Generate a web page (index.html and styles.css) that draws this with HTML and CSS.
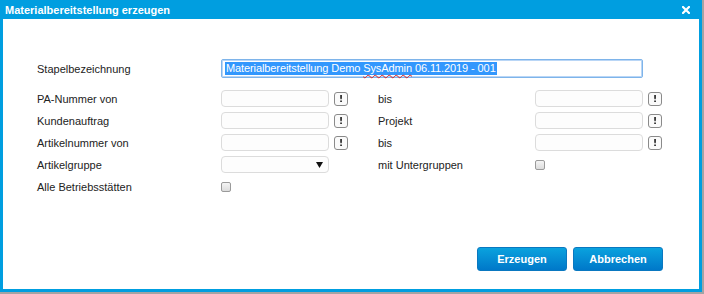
FILE: index.html
```html
<!DOCTYPE html>
<html lang="de">
<head>
<meta charset="utf-8">
<title>Materialbereitstellung erzeugen</title>
<link rel="stylesheet" href="styles.css">
</head>
<body>
<div class="dialog">
  <div class="titlebar">
    <span class="title">Materialbereitstellung erzeugen</span>
    <svg class="close" width="8" height="8" viewBox="0 0 8 8"><path d="M1 1L7 7M7 1L1 7" stroke="#fff" stroke-width="2.2" stroke-linecap="square"/></svg>
  </div>
  <div class="content">
    <div class="row-main">
      <label class="lbl">Stapelbezeichnung</label>
      <div class="field-main"><span class="sel">Materialbereitstellung Demo <span class="spell">SysAdmin</span> 06.11.2019 - 001</span></div>
    </div>
    <div class="grid">
      <label class="lbl">PA-Nummer von</label>
      <div class="field"></div><div class="btn-x">!</div><span></span>
      <label class="lbl">bis</label>
      <div class="field"></div><div class="btn-x">!</div>

      <label class="lbl">Kundenauftrag</label>
      <div class="field"></div><div class="btn-x">!</div><span></span>
      <label class="lbl">Projekt</label>
      <div class="field"></div><div class="btn-x">!</div>

      <label class="lbl">Artikelnummer von</label>
      <div class="field"></div><div class="btn-x">!</div><span></span>
      <label class="lbl">bis</label>
      <div class="field"></div><div class="btn-x">!</div>

      <label class="lbl">Artikelgruppe</label>
      <div class="field select"><svg width="7" height="6" viewBox="0 0 7 6"><path d="M0 0H7L3.5 6Z" fill="#111"/></svg></div><span></span><span></span>
      <label class="lbl">mit Untergruppen</label>
      <div class="cell"><span class="check"></span></div><span></span>

      <label class="lbl">Alle Betriebsstätten</label>
      <div class="cell"><span class="check"></span></div>
    </div>
    <div class="footer">
      <button class="btn">Erzeugen</button>
      <button class="btn">Abbrechen</button>
    </div>
  </div>
</div>
</body>
</html>
```
FILE: styles.css
```css
html, body {
  margin: 0;
  padding: 0;
}
body {
  width: 704px;
  height: 294px;
  background: #a4a4a4;
  font-family: "Liberation Sans", Arial, sans-serif;
  overflow: hidden;
}
.dialog {
  width: 702px;
  height: 292px;
  box-sizing: border-box;
  background: #009ee0;
  padding: 0 3px 3px 3px;
  display: flex;
  flex-direction: column;
}
.titlebar {
  height: 19px;
  flex: none;
  display: flex;
  align-items: center;
  justify-content: space-between;
  padding: 0 9px 0 2px;
}
.title {
  color: #fff;
  font-weight: bold;
  font-size: 11px;
}
.close {
  display: block;
}
.content {
  flex: 1;
  background: #fff;
  display: flex;
  flex-direction: column;
  padding: 40px 36px 18px 34px;
}
.lbl {
  font-size: 11px;
  color: #222;
  display: flex;
  align-items: center;
}
.row-main {
  display: flex;
  align-items: center;
  height: 19px;
  margin-bottom: 12px;
}
.row-main .lbl {
  width: 184px;
}
.field-main {
  width: 422px;
  height: 19px;
  box-sizing: border-box;
  border: 1px solid #7eb4ea;
  box-shadow: 0 0 0 1px #b9d6f6 inset;
  border-radius: 2px;
  display: flex;
  align-items: center;
  padding-left: 3px;
}
.sel {
  background: #3297fd;
  color: #fff;
  font-size: 11px;
  letter-spacing: -0.1px;
  line-height: 13px;
  padding: 0 1px;
  white-space: nowrap;
}
.spell {
  text-decoration: underline wavy #e02020;
  text-decoration-thickness: 1px;
  text-underline-offset: 2px;
}
.grid {
  display: grid;
  grid-template-columns: 184px 108px 19px 30px 157px 108px 19px;
  grid-auto-rows: 17px;
  row-gap: 5px;
}
.field {
  height: 17px;
  box-sizing: border-box;
  border: 1px solid #dcdcdc;
  border-radius: 4px;
  background: #fdfdfd;
}
.select {
  display: flex;
  align-items: center;
  justify-content: flex-end;
  padding-right: 5px;
}
.select svg {
  display: block;
}
.btn-x {
  justify-self: end;
  align-self: center;
  width: 14px;
  height: 14px;
  box-sizing: border-box;
  border: 1px solid #8a8a8a;
  border-radius: 3px;
  background: #fafafa;
  font-family: "DejaVu Sans", sans-serif;
  font-size: 9px;
  font-weight: bold;
  color: #111111;
  display: flex;
  align-items: center;
  justify-content: center;
  line-height: 1;
  will-change: transform;
  transform: translateZ(0);
}
.cell {
  display: flex;
  align-items: center;
}
.check {
  width: 10px;
  height: 10px;
  box-sizing: border-box;
  border: 1px solid #9a9a9a;
  border-radius: 2px;
  background: linear-gradient(#f4f4f4, #dcdcdc);
}
.footer {
  margin-top: auto;
  display: flex;
  justify-content: flex-end;
  gap: 6px;
}
.btn {
  width: 90px;
  height: 24px;
  box-sizing: border-box;
  border: 1px solid #0a78c0;
  border-radius: 3px;
  background: linear-gradient(#0aa2de, #0078c9);
  color: #fff;
  font-family: "Liberation Sans", Arial, sans-serif;
  font-weight: bold;
  font-size: 11px;
  padding: 0;
}
```
